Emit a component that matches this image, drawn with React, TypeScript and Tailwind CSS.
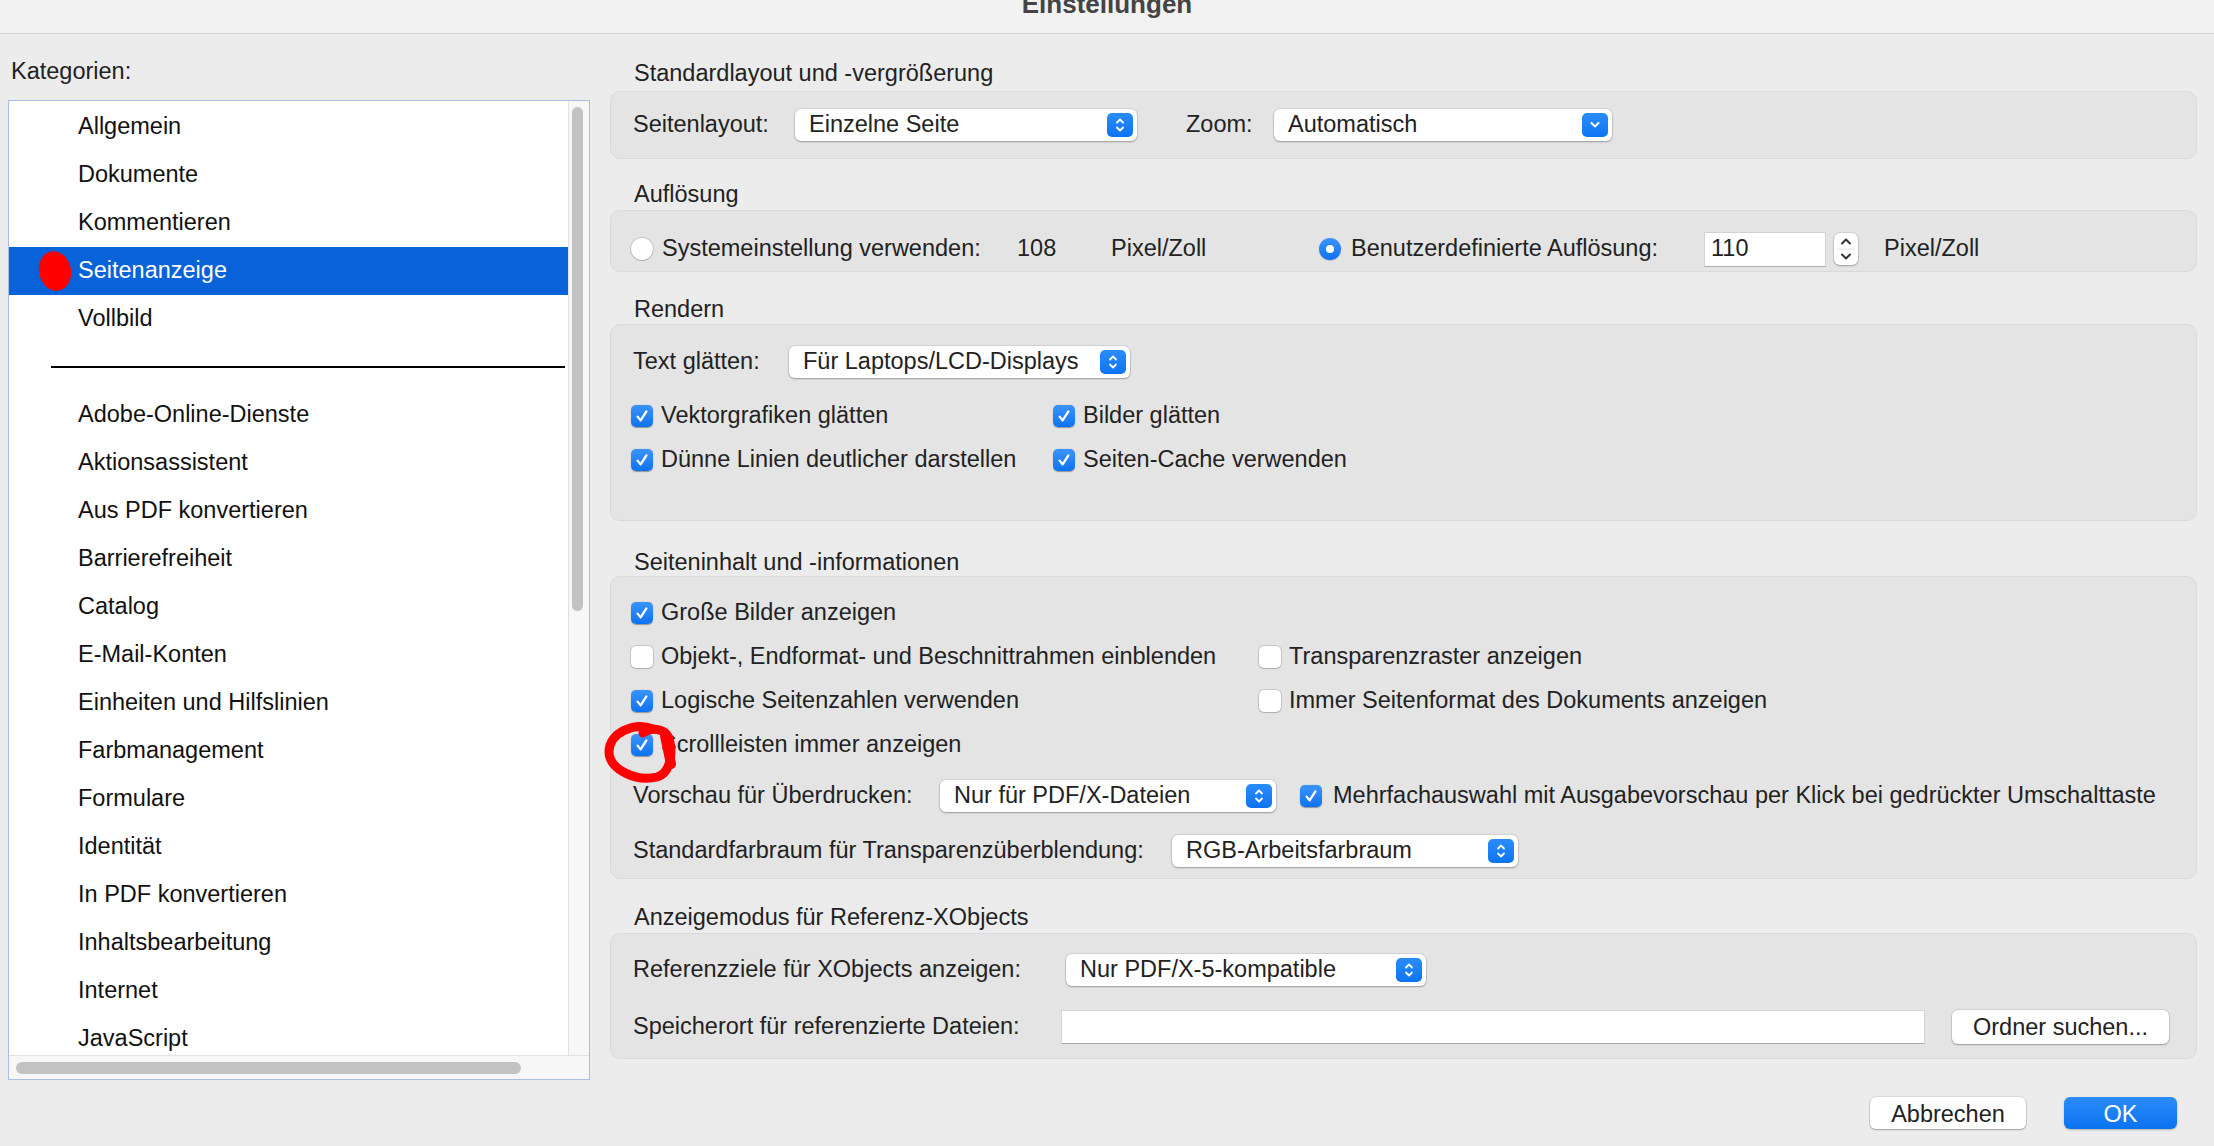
import React from "react"

const categoriesTop = ["Allgemein", "Dokumente", "Kommentieren", "Seitenanzeige", "Vollbild"]
const categoriesBottom = [
  "Adobe-Online-Dienste",
  "Aktionsassistent",
  "Aus PDF konvertieren",
  "Barrierefreiheit",
  "Catalog",
  "E-Mail-Konten",
  "Einheiten und Hilfslinien",
  "Farbmanagement",
  "Formulare",
  "Identität",
  "In PDF konvertieren",
  "Inhaltsbearbeitung",
  "Internet",
  "JavaScript",
]

function Check({ on }: { on?: boolean }) {
  if (!on) {
    return (
      <span className="h-[22px] w-[22px] shrink-0 rounded-[5px] bg-white shadow-[0_0_0_1px_rgba(0,0,0,0.13),0_1px_1px_rgba(0,0,0,0.12)]" />
    )
  }
  return (
    <span className="flex h-[22px] w-[22px] shrink-0 items-center justify-center rounded-[5px] bg-linear-to-b from-[#3b94fc] to-[#0a72f1] shadow-[0_0.5px_1px_rgba(0,0,0,0.35)]">
      <svg width="16" height="16" viewBox="0 0 16 16">
        <path d="M3.6 8.6 L6.6 12.4 L12.4 3.4" fill="none" stroke="white" strokeWidth="2.3" strokeLinecap="round" strokeLinejoin="round" />
      </svg>
    </span>
  )
}

function Radio({ on }: { on?: boolean }) {
  if (!on) {
    return (
      <span className="h-[22px] w-[22px] shrink-0 rounded-full bg-white shadow-[0_0_0_1px_rgba(0,0,0,0.13),0_1px_1px_rgba(0,0,0,0.12)]" />
    )
  }
  return (
    <span className="flex h-[22px] w-[22px] shrink-0 items-center justify-center rounded-full bg-linear-to-b from-[#3b94fc] to-[#0a72f1] shadow-[0_0.5px_1px_rgba(0,0,0,0.35)]">
      <span className="h-[8px] w-[8px] rounded-full bg-white" />
    </span>
  )
}

function Select({ w, text, single }: { w: string; text: string; single?: boolean }) {
  return (
    <div className={`${w} flex h-[32px] shrink-0 items-center justify-between rounded-[6px] bg-white pl-[14px] pr-[4px] shadow-[0_0_0_1px_rgba(0,0,0,0.07),0_1px_2px_rgba(0,0,0,0.28)]`}>
      <span className="whitespace-nowrap">{text}</span>
      <span className="flex h-[24px] w-[26px] items-center justify-center rounded-[5px] bg-linear-to-b from-[#2a8cfb] to-[#0b74f2]">
        {single ? (
          <svg width="26" height="24" viewBox="0 0 26 24">
            <path d="M9.5 10 L13 13.5 L16.5 10" fill="none" stroke="white" strokeWidth="2" strokeLinecap="round" strokeLinejoin="round" />
          </svg>
        ) : (
          <svg width="26" height="24" viewBox="0 0 26 24">
            <path d="M10 9.5 L13 6.5 L16 9.5" fill="none" stroke="white" strokeWidth="1.8" strokeLinecap="round" strokeLinejoin="round" />
            <path d="M10 14.5 L13 17.5 L16 14.5" fill="none" stroke="white" strokeWidth="1.8" strokeLinecap="round" strokeLinejoin="round" />
          </svg>
        )}
      </span>
    </div>
  )
}

function Header({ className, children }: { className: string; children: React.ReactNode }) {
  return <div className={`${className} h-[28px] pl-[24px] leading-[28px] whitespace-nowrap`}>{children}</div>
}

export default function App() {
  return (
    <div className="flex h-[1146px] w-[2214px] flex-col overflow-hidden bg-[#ececec] font-['Liberation_Sans',Arial,sans-serif] text-[23.5px] text-[#222]">
      {/* title bar, cut off at the top */}
      <div className="flex h-[34px] shrink-0 justify-center overflow-hidden border-b border-[#d0d0d0] bg-[#f2f2f2]">
        <span className="mt-[-11px] text-[26px] font-bold leading-[30px] text-[#444]">Einstellungen</span>
      </div>

      <div className="flex flex-1">
        {/* categories */}
        <div className="ml-[8px] flex w-[582px] shrink-0 flex-col">
          <div className="mt-[23px] h-[28px] pl-[3px] leading-[28px]">Kategorien:</div>
          <div className="mt-[15px] flex h-[980px] flex-col border border-[#a8bee6] bg-white">
            <div className="flex h-[954px]">
              <div className="w-[559px] overflow-hidden pt-[2px] text-[#111]">
                {categoriesTop.map((c) =>
                  c === "Seitenanzeige" ? (
                    <div key={c} className="relative flex h-[48px] items-center bg-[#0862d9] pl-[69px] text-white">
                      <span className="absolute left-[30px] top-[4px] h-[40px] w-[32px] -rotate-12 rounded-[50%] bg-[#ff0000]" />
                      {c}
                    </div>
                  ) : (
                    <div key={c} className="flex h-[48px] items-center pl-[69px]">
                      {c}
                    </div>
                  )
                )}
                <div className="flex h-[48px] items-center pl-[42px] pr-[3px]">
                  <div className="h-[2px] flex-1 bg-black" />
                </div>
                {categoriesBottom.map((c) => (
                  <div key={c} className="flex h-[48px] items-center pl-[69px]">
                    {c}
                  </div>
                ))}
              </div>
              <div className="w-[21px] border-l border-[#e2e2e2] bg-[#f7f7f7] pl-[3px] pt-[6px]">
                <div className="h-[504px] w-[11px] rounded-full bg-[#c2c2c2]" />
              </div>
            </div>
            <div className="h-[24px] border-t border-[#e2e2e2] bg-[#f7f7f7] pl-[7px] pt-[6px]">
              <div className="h-[12px] w-[505px] rounded-full bg-[#c2c2c2]" />
            </div>
          </div>
        </div>

        {/* settings */}
        <div className="ml-[20px] flex w-[1587px] shrink-0 flex-col">
          <Header className="mt-[25px]">Standardlayout und -vergrößerung</Header>
          <div className="mt-[4px] flex h-[68px] items-center rounded-[10px] border border-[#dadada] bg-[#e4e4e4] pl-[22px]">
            <span className="w-[162px] shrink-0">Seitenlayout:</span>
            <Select w="w-[342px]" text="Einzelne Seite" />
            <span className="ml-[49px] w-[88px] shrink-0">Zoom:</span>
            <Select w="w-[338px]" text="Automatisch" single />
          </div>

          <Header className="mt-[21px]">Auflösung</Header>
          <div className="mt-[2px] h-[62px] rounded-[10px] border border-[#dadada] bg-[#e4e4e4] pl-[20px] pt-[22px]">
            <div className="flex h-[32px] items-center whitespace-nowrap">
              <Radio />
              <span className="ml-[9px] w-[355px] shrink-0">Systemeinstellung verwenden:</span>
              <span className="w-[94px] shrink-0">108</span>
              <span className="w-[208px] shrink-0">Pixel/Zoll</span>
              <Radio on />
              <span className="ml-[10px] w-[353px] shrink-0">Benutzerdefinierte Auflösung:</span>
              <div className="flex h-[35px] w-[122px] shrink-0 items-center border border-[#d2d2d2] border-b-[#ababab] bg-white pl-[6px]">
                110
              </div>
              <div className="ml-[8px] flex h-[32px] w-[24px] shrink-0 flex-col items-center justify-center rounded-[6px] bg-white shadow-[0_0_0_1px_rgba(0,0,0,0.07),0_1px_2px_rgba(0,0,0,0.25)]">
                <svg width="24" height="32" viewBox="0 0 24 32">
                  <path d="M8 10.5 L12 6.5 L16 10.5" fill="none" stroke="#333" strokeWidth="2" strokeLinecap="round" strokeLinejoin="round" />
                  <line x1="3" y1="16" x2="21" y2="16" stroke="#e2e2e2" strokeWidth="1" />
                  <path d="M8 21.5 L12 25.5 L16 21.5" fill="none" stroke="#333" strokeWidth="2" strokeLinecap="round" strokeLinejoin="round" />
                </svg>
              </div>
              <span className="ml-[26px]">Pixel/Zoll</span>
            </div>
          </div>

          <Header className="mt-[23px]">Rendern</Header>
          <div className="mt-[1px] h-[197px] rounded-[10px] border border-[#dadada] bg-[#e4e4e4] pl-[20px] pt-[20px] whitespace-nowrap">
            <div className="flex h-[34px] items-center pl-[2px]">
              <span className="w-[156px] shrink-0">Text glätten:</span>
              <Select w="w-[341px]" text="Für Laptops/LCD-Displays" />
            </div>
            <div className="mt-[15px] grid grid-cols-[422px_auto]">
              <div className="flex h-[44px] items-center gap-[8px]">
                <Check on />
                <span>Vektorgrafiken glätten</span>
              </div>
              <div className="flex h-[44px] items-center gap-[8px]">
                <Check on />
                <span>Bilder glätten</span>
              </div>
              <div className="flex h-[44px] items-center gap-[8px]">
                <Check on />
                <span>Dünne Linien deutlicher darstellen</span>
              </div>
              <div className="flex h-[44px] items-center gap-[8px]">
                <Check on />
                <span>Seiten-Cache verwenden</span>
              </div>
            </div>
          </div>

          <Header className="mt-[27px]">Seiteninhalt und -informationen</Header>
          <div className="h-[303px] rounded-[10px] border border-[#dadada] bg-[#e4e4e4] pl-[20px] pt-[14px] whitespace-nowrap">
            <div className="grid grid-cols-[628px_auto]">
              <div className="col-span-2 flex h-[44px] items-center gap-[8px]">
                <Check on />
                <span>Große Bilder anzeigen</span>
              </div>
              <div className="flex h-[44px] items-center gap-[8px]">
                <Check />
                <span>Objekt-, Endformat- und Beschnittrahmen einblenden</span>
              </div>
              <div className="flex h-[44px] items-center gap-[8px]">
                <Check />
                <span>Transparenzraster anzeigen</span>
              </div>
              <div className="flex h-[44px] items-center gap-[8px]">
                <Check on />
                <span>Logische Seitenzahlen verwenden</span>
              </div>
              <div className="flex h-[44px] items-center gap-[8px]">
                <Check />
                <span>Immer Seitenformat des Dokuments anzeigen</span>
              </div>
              <div className="relative col-span-2 flex h-[44px] items-center gap-[8px]">
                <Check on />
                <span>Scrollleisten immer anzeigen</span>
                {/* red hand-drawn annotation */}
                <svg className="absolute left-[-30px] top-[-3px]" width="84" height="64" viewBox="0 0 84 64">
                  <path
                    d="M52 9 C34 2, 8 12, 8 32 C8 50, 36 62, 56 57 C70 53, 72 32, 68 18 C63 8, 50 7, 42 13"
                    fill="none"
                    stroke="#ff0000"
                    strokeWidth="9"
                    strokeLinecap="round"
                    strokeLinejoin="round"
                  />
                  <path d="M64 16 L70 44" fill="none" stroke="#ff0000" strokeWidth="10" strokeLinecap="round" />
                </svg>
              </div>
            </div>
            <div className="mt-[12px] flex h-[34px] items-center pl-[2px]">
              <span className="w-[307px] shrink-0">Vorschau für Überdrucken:</span>
              <Select w="w-[336px]" text="Nur für PDF/X-Dateien" />
              <span className="ml-[24px]">
                <Check on />
              </span>
              <span className="ml-[11px]">Mehrfachauswahl mit Ausgabevorschau per Klick bei gedrückter Umschalttaste</span>
            </div>
            <div className="mt-[21px] flex h-[34px] items-center pl-[2px]">
              <span className="w-[539px] shrink-0">Standardfarbraum für Transparenzüberblendung:</span>
              <Select w="w-[346px]" text="RGB-Arbeitsfarbraum" />
            </div>
          </div>

          <Header className="mt-[24px]">Anzeigemodus für Referenz-XObjects</Header>
          <div className="mt-[2px] h-[126px] rounded-[10px] border border-[#dadada] bg-[#e4e4e4] pl-[22px] pt-[19px] whitespace-nowrap">
            <div className="flex h-[34px] items-center">
              <span className="w-[433px] shrink-0">Referenzziele für XObjects anzeigen:</span>
              <Select w="w-[360px]" text="Nur PDF/X-5-kompatible" />
            </div>
            <div className="mt-[23px] flex h-[34px] items-center">
              <span className="w-[428px] shrink-0">Speicherort für referenzierte Dateien:</span>
              <div className="h-[34px] w-[864px] shrink-0 border border-[#d4d4d4] border-b-[#acacac] bg-white" />
              <button className="ml-[27px] h-[34px] w-[217px] shrink-0 rounded-[6px] bg-white shadow-[0_0_0_1px_rgba(0,0,0,0.07),0_1px_2px_rgba(0,0,0,0.28)]">
                Ordner suchen...
              </button>
            </div>
          </div>

          <div className="mt-[38px] flex h-[32px] justify-end gap-[38px] pr-[20px]">
            <button className="h-[32px] w-[156px] rounded-[6px] bg-white shadow-[0_0_0_1px_rgba(0,0,0,0.07),0_1px_2px_rgba(0,0,0,0.28)]">
              Abbrechen
            </button>
            <button className="h-[32px] w-[113px] rounded-[6px] bg-linear-to-b from-[#2a8cfb] to-[#0a72f0] text-white shadow-[0_1px_2px_rgba(0,0,0,0.25)]">
              OK
            </button>
          </div>
        </div>
      </div>
    </div>
  )
}
